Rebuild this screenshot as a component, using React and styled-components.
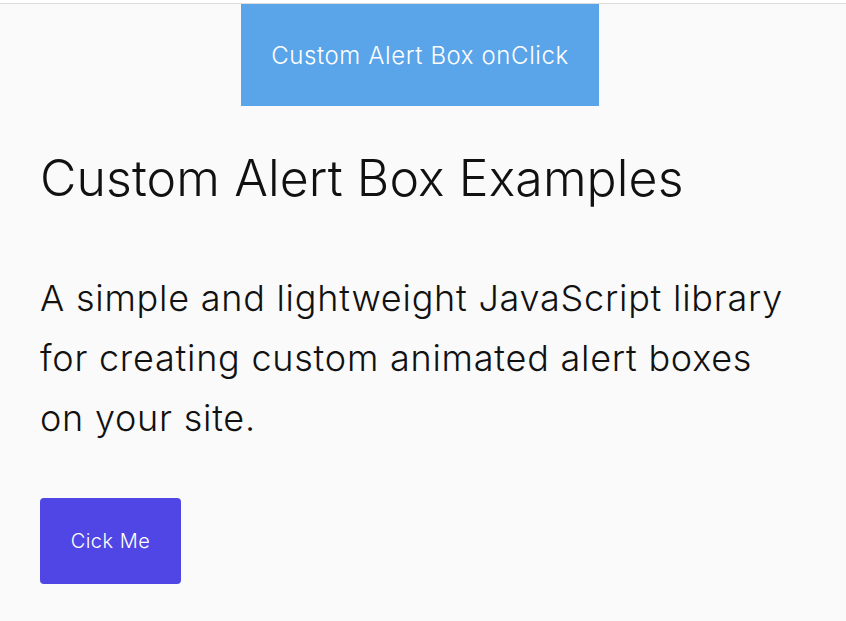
import React from "react";
import styled, { createGlobalStyle } from "styled-components";

const Global = createGlobalStyle`
  html, body { margin: 0; padding: 0; background: #fafafa; }
  body {
    font-family: Inter, "Noto Sans", sans-serif;
    color: #111;
  }
`;

const TopRule = styled.div`
  height: 3px;
  background: #ffffff;
  border-bottom: 1px solid #dcdcdc;
`;

const Page = styled.main`
  padding: 0 46px 40px 40px;
  display: flex;
  flex-direction: column;
  align-items: flex-start;
`;

const Banner = styled.div`
  align-self: center;
  width: 358px;
  height: 102px;
  box-sizing: border-box;
  background: #5aa5ea;
  color: #fff;
  font-size: 24px;
  letter-spacing: 0.6px;
  display: flex;
  align-items: center;
  justify-content: center;
  font-weight: 300;
`;

const Title = styled.h1`
  margin: 42px 0 0;
  font-size: 50px;
  font-weight: 300;
  letter-spacing: 0.1px;
  line-height: 60px;
  color: #111;
`;

const Lead = styled.p`
  margin: 60px 0 0;
  font-size: 36px;
  letter-spacing: 0.76px;
  line-height: 60px;
  max-width: 760px;
  font-weight: 300;
  color: #111;
`;

const Button = styled.button`
  margin-top: 50px;
  width: 141px;
  height: 86px;
  border: 0;
  border-radius: 4px;
  background: #4f46e5;
  color: #fff;
  font-family: inherit;
  font-size: 20px;
  letter-spacing: 0.5px;
  font-weight: 300;
  cursor: pointer;
`;

export default function App() {
  return (
    <>
      <Global />
      <TopRule />
      <Page>
        <Banner>Custom Alert Box onClick</Banner>
        <Title>Custom Alert Box Examples</Title>
        <Lead>
          A simple and lightweight JavaScript library for creating custom
          animated alert boxes on your site.
        </Lead>
        <Button>Cick Me</Button>
      </Page>
    </>
  );
}
